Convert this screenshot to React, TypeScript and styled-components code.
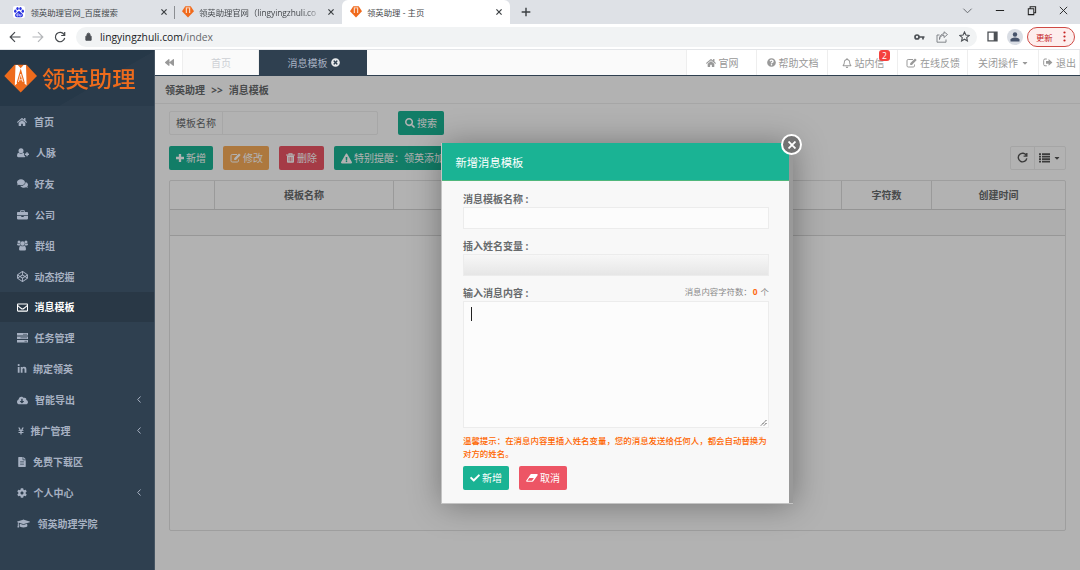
import React from 'react';
import styled, { createGlobalStyle } from 'styled-components';
import {
  FaHome, FaComments, FaCodepen, FaRegEnvelope,
  FaCloudDownloadAlt, FaYenSign, FaFileAlt, FaCog, FaGraduationCap, FaBackward,
  FaTimesCircle, FaQuestionCircle, FaRegBell, FaCaretDown, FaSearch,
  FaExclamationTriangle, FaCheck, FaLinkedinIn,
} from 'react-icons/fa';

const Global = createGlobalStyle`
  * { box-sizing: border-box; }
  html, body { margin: 0; padding: 0; overflow: hidden; }
  body {
    font-family: "Open Sans", "Noto Sans CJK SC", sans-serif;
    font-size: 10px;
    color: #676a6c;
  }
  svg { display: block; flex: none; }
`;

const Window = styled.div`
  width: 1080px;
  height: 570px;
  display: flex;
  flex-direction: column;
  background: #fff;
  overflow: hidden;
`;

/* Browser frame */
const TabStrip = styled.div`
  height: 24px;
  flex: none;
  display: flex;
  background: #dee1e6;
`;
const BrowserTab = styled.div<{ $w: number; $inset: number; $gap: number; $active?: boolean; $line?: boolean }>`
  width: ${p => p.$w}px;
  height: 24px;
  padding: 0 8px 0 ${p => p.$inset}px;
  display: flex;
  align-items: center;
  gap: ${p => p.$gap}px;
  font-size: 8.4px;
  color: #45494d;
  background-color: ${p => (p.$active ? '#fff' : 'transparent')};
  border-radius: 6px 6px 0 0;
  background-image: ${p => (p.$line ? 'linear-gradient(#8b8e92, #8b8e92)' : 'none')};
  background-repeat: no-repeat;
  background-size: 1px 13px;
  background-position: right 6px;
`;
const TabTitle = styled.span<{ $fade?: boolean }>`
  flex: 1;
  min-width: 0;
  white-space: nowrap;
  line-height: 14px;
  padding-top: 1px;
  letter-spacing: ${p => (p.$fade ? '-0.05px' : '0')};
  mask-image: ${p => (p.$fade ? 'linear-gradient(90deg, #000 86%, transparent)' : 'none')};
`;
const WindowButtons = styled.div`
  margin-left: auto;
  display: flex;
  gap: 21px;
  padding: 5px 11px 0 0;
`;
const NewTab = styled.div`
  padding: 7px 0 0 11px;
`;
const AddressRow = styled.div`
  height: 26px;
  flex: none;
  display: flex;
  align-items: center;
  border-bottom: 1px solid #e3e5e8;
  padding: 0 5px 0 9px;
`;
const NavIcons = styled.div`
  width: 67px;
  flex: none;
  display: flex;
  gap: 10.5px;
`;
const AddressBar = styled.div`
  width: 901px;
  flex: none;
  height: 20px;
  border-radius: 10px;
  background: #f1f3f4;
  display: flex;
  align-items: center;
  padding: 0 7px 0 8px;
`;
const Url = styled.span`
  flex: 1;
  padding-left: 7px;
  font-size: 10.3px;
  line-height: 14px;
  color: #66696d;
  b { font-weight: 400; color: #202124; }
`;
const BarIcons = styled.div`
  display: flex;
  align-items: center;
  gap: 11px;
`;
const BarEnd = styled.div`
  flex: 1;
  display: flex;
  align-items: center;
  justify-content: flex-end;
`;
const Avatar = styled.div`
  width: 16px;
  height: 16px;
  margin: 0 4px 0 9px;
  border-radius: 50%;
  background: #d9dde4;
  display: grid;
  place-items: center;
`;
const Update = styled.div`
  width: 48px;
  height: 20px;
  border: 1px solid #cf4a45;
  border-radius: 10px;
  background: #fdeeed;
  color: #c5221f;
  font-size: 8.4px;
  display: flex;
  align-items: center;
  justify-content: space-between;
  padding: 0 8px 0 8px;
`;

/* Sidebar */
const Body = styled.div`
  flex: 1;
  display: flex;
  min-height: 0;
`;
const Sidebar = styled.nav`
  width: 155px;
  flex: none;
  background: #2f4050;
  border-right: 1px solid #465563;
`;
const Brand = styled.div`
  height: 56px;
  padding-left: 4px;
  display: flex;
  align-items: center;
  gap: 5px;
  background: linear-gradient(150deg, #263848 0 62%, #2a3b4b 62.5%);
  color: #ee6b1c;
  font-size: 23.4px;
  font-weight: 500;
  line-height: 30px;
  font-family: "Noto Sans CJK SC", sans-serif;
`;
const BrandName = styled.span`
  display: block;
  transform: scaleY(0.93);
`;
const MenuItem = styled.div<{ $active?: boolean }>`
  height: 30.93px;
  padding: 1px 13px 0 17px;
  display: flex;
  align-items: center;
  font-weight: 700;
  line-height: 16px;
  color: ${p => (p.$active ? '#fff' : '#a7b1c2')};
  background: ${p => (p.$active ? '#293846' : 'transparent')};
`;
const IconSlot = styled.span<{ $w: number }>`
  width: ${p => p.$w}px;
`;
const Chevron = styled.span`
  margin-left: auto;
  padding-bottom: 2px;
`;

/* Main */
const Main = styled.div`
  flex: 1;
  min-width: 0;
  display: flex;
  flex-direction: column;
`;
const TopNav = styled.div`
  height: 26px;
  flex: none;
  display: flex;
  background: #fafafa;
  border-bottom: 1px solid #2f4050;
  color: #999;
  line-height: 14px;
`;
const NavCell = styled.div<{ $w: number; $kind?: 'dark' | 'faint' | 'white' }>`
  width: ${p => p.$w}px;
  height: 25px;
  display: flex;
  align-items: center;
  justify-content: center;
  gap: 3px;
  padding-left: 1px;
  white-space: nowrap;
  color: ${p => (p.$kind === 'dark' ? '#a7b1c2' : p.$kind === 'faint' ? '#cdd0d5' : '#999')};
  background: ${p => (p.$kind === 'dark' ? '#2f4050' : p.$kind === 'white' ? '#fff' : '#fafafa')};
  border-right: ${p => (p.$kind === 'dark' ? 0 : 1)}px solid #eee;
  position: relative;
`;
const Spacer = styled.div`
  flex: 1;
  border-right: 1px solid #eee;
`;
const Badge = styled.span`
  position: absolute;
  right: 7px;
  top: 0;
  width: 11px;
  height: 11px;
  border-radius: 3px;
  background: #f5413d;
  color: #fff;
  font-size: 8.5px;
  line-height: 11px;
  text-align: center;
`;
const Page = styled.div`
  flex: 1;
  position: relative;
  background: #fff;
  overflow: hidden;
`;
const Crumbs = styled.div`
  height: 28px;
  padding: 0 10px;
  border-bottom: 1px solid #eee;
  font-weight: 700;
  line-height: 28px;
  word-spacing: 3.6px;
`;
const Content = styled.div`
  padding: 7px 14px 0;
`;
const SearchRow = styled.div`
  display: flex;
  gap: 20px;
`;
const SearchGroup = styled.div`
  width: 209px;
  height: 24px;
  display: flex;
  border: 1px solid #efefef;
  border-radius: 2px;
  line-height: 22px;
`;
const SearchLabel = styled.div`
  width: 53px;
  padding-left: 6px;
  border-right: 1px solid #efefef;
`;
const tones = { green: '#1ab394', orange: '#f8ac59', red: '#ed5565' };
const Button = styled.div<{ $tone: keyof typeof tones; $w: number }>`
  width: ${p => p.$w}px;
  height: 24px;
  flex: none;
  display: flex;
  align-items: center;
  gap: 2px;
  padding-left: 7px;
  border-radius: 2px;
  background: ${p => tones[p.$tone]};
  color: #fff;
  line-height: 16px;
  white-space: nowrap;
`;
const ToolRow = styled.div`
  display: flex;
  gap: 10px;
  margin-top: 11px;
`;
const ToolGroup = styled.div`
  margin-left: auto;
  width: 56px;
  height: 24px;
  display: flex;
  border: 1px solid #ededed;
  border-radius: 2px;
`;
const Tool = styled.div<{ $w: number }>`
  width: ${p => p.$w}px;
  display: flex;
  align-items: center;
  justify-content: center;
  gap: 3px;
  padding-bottom: 1px;
  & + & { border-left: 1px solid #ededed; }
`;
const Table = styled.div`
  height: 351px;
  margin-top: 10px;
  border: 1px solid #e2e2e2;
  border-radius: 2px;
`;
const HeadRow = styled.div`
  height: 29px;
  display: grid;
  grid-template-columns: 45px 179px 448px 90px 1fr;
  border-bottom: 1px solid #d5d5d5;
`;
const HeadCell = styled.div`
  display: grid;
  place-items: center;
  font-weight: 700;
  line-height: 16px;
  border-right: 1px solid #ddd;
  &:last-child { border-right: 0; }
`;
const EmptyRow = styled.div`
  height: 26px;
  background: #f9f9f9;
  border-bottom: 1px solid #d9d9d9;
`;
const Shade = styled.div`
  position: absolute;
  inset: 0;
  background: rgba(0, 0, 0, 0.3);
`;

/* Dialog over the page */
const Dialog = styled.div`
  position: absolute;
  left: 286px;
  top: 67px;
  width: 352px;
  height: 361px;
  background: #999;
  border: 1px solid #c4c4c4;
  border-width: 0 0 1px 1px;
  box-shadow: 1px 1px 30px rgba(0, 0, 0, 0.35);
`;
const Sheet = styled.div`
  width: 347px;
  height: 360px;
  background: #f8f8f8;
`;
const DialogTitle = styled.div`
  height: 38px;
  padding-left: 13.5px;
  background: #1ab394;
  border-bottom: 1px solid #4fb77c;
  color: #fff;
  font-size: 11.3px;
  line-height: 39px;
`;
const CloseDialog = styled.div`
  position: absolute;
  right: -9px;
  top: -9px;
  width: 21px;
  height: 21px;
  border: 2px solid #fff;
  border-radius: 50%;
  background: #737373;
  display: grid;
  place-items: center;
`;
const Form = styled.div`
  padding: 10px 20px 0 21px;
`;
const LabelRow = styled.div`
  height: 16px;
  display: flex;
  justify-content: space-between;
  font-weight: 700;
  line-height: 17px;
`;
const Counter = styled.span`
  font-size: 8.4px;
  font-weight: 400;
  line-height: 13px;
  color: #888;
  b { color: #ff6a13; padding: 0 1px; }
`;
const Field = styled.div<{ $h: number; $shaded?: boolean }>`
  height: ${p => p.$h}px;
  border: 1px solid #ececec;
  background: ${p => (p.$shaded ? 'linear-gradient(#f7f7f7, #e6e6e6)' : '#fcfcfc')};
  margin-bottom: 9px;
  position: relative;
`;
const Caret = styled.div`
  width: 1px;
  height: 14px;
  margin: 5px 0 0 7px;
  background: #222;
`;
const Grip = styled.svg`
  position: absolute;
  right: 1px;
  bottom: 1px;
`;
const Tip = styled.div`
  margin-top: -2px;
  color: #ff6600;
  font-size: 8.45px;
  font-weight: 500;
  line-height: 12.5px;
  white-space: nowrap;
`;
const Actions = styled.div`
  display: flex;
  gap: 10px;
  margin-top: 6px;
`;

const TieLogo = () => (
  <svg width="33" height="29" viewBox="0 0 33 29">
    <path d="M10.500 .8H22.500L33 12L16.700 28.500L.3 12Z" fill="#ee6b1c" />
    <path d="M11.500 1H13.800L16.700 4.300L19.600 1H22L22.600 21.500L20.500 19.500L16.900 7.500H16.500L13 19.500L10.800 21.500Z" fill="#fff" />
    <path d="M16.700 4.500L20.700 18.500L16.700 22L12.700 18.500Z" fill="#ee6b1c" />
    <path d="M16.700 10L19 18M16.700 10L14.400 18M15.200 15.800H18.200" stroke="#fff" strokeWidth=".8" fill="none" />
  </svg>
);
const MiniLogo = () => (
  <svg width="12" height="12" viewBox="0 0 12 12">
    <path d="M3.300 .2H8.700L12 5.200L6 11.500L0 5.200Z" fill="#f06a1c" />
    <path d="M4.300 1.300V7M7.700 1.300V7M6 1V2.500" stroke="#fff" strokeWidth=".9" />
  </svg>
);
const Paw = () => (
  <svg width="12" height="12" viewBox="0 0 12 12">
    <rect width="12" height="12" rx="2" fill="#fff" />
    <g fill="#2932e1">
      <ellipse cx="2.300" cy="5.200" rx="1.200" ry="1.600" />
      <ellipse cx="4.500" cy="2.600" rx="1.200" ry="1.600" />
      <ellipse cx="7.500" cy="2.600" rx="1.200" ry="1.600" />
      <ellipse cx="9.800" cy="5.200" rx="1.200" ry="1.600" />
      <path d="M6 5C4.800 5 4.300 6.600 3.200 7.300C1.200 8.800 2.100 11.500 4.200 11.200H7.800C10 11.500 10.800 8.800 8.800 7.300C7.700 6.600 7.200 5 6 5Z" />
    </g>
    <path d="M4.900 8h-1v2h1.200v-3M6.600 8v2h1.500v-2" fill="none" stroke="#fff" strokeWidth=".6" />
  </svg>
);
const Cross = ({ s = 6, c = '#3c4043', sw = 1.2 }: { s?: number; c?: string; sw?: number }) => (
  <svg width={s} height={s} viewBox="0 0 6 6">
    <path d="M.4 .4L5.600 5.600M5.600 .4L.4 5.600" stroke={c} strokeWidth={(sw * 6) / s} />
  </svg>
);
const Lines = ({ d, s = 10, c = '#5f6368', sw = 1.2, fill = 'none' }: { d: string; s?: number; c?: string; sw?: number; fill?: string }) => (
  <svg width={s} height={s} viewBox="0 0 12 12">
    <path d={d} fill={fill} stroke={c} strokeWidth={sw} />
  </svg>
);
const reloadPath = 'M10.200 3.700A4.700 4.700 0 1 0 10.700 7M10.700 1V4.500H7.200';

const ServerBars = () => (
  <svg width="11" height="10" viewBox="0 0 11 10">
    <path d="M0 1.300h11M0 4.800h11M0 8.300h11" stroke="currentColor" strokeWidth="2.500" />
    <path d="M6 1.300h4M3.500 4.800h6.500M7.500 8.300h2.500" stroke="#2f4050" strokeWidth=".6" />
  </svg>
);
const PersonPlus = () => (
  <svg width="12" height="10" viewBox="0 0 12 10" fill="currentColor">
    <circle cx="4" cy="2.800" r="2.500" />
    <path d="M1.800 4.800Q4 6.800 6.200 4.800Q6.800 4.900 7.200 5.500V7.800H8.200V8.700Q7.900 9.200 7 9.200H1.300Q0 9.200 0 7.800Q0 5 1.800 4.800Z" />
    <path d="M8 5.500H12V7H8ZM9.250 4.200H10.750V8.300H9.250Z" />
  </svg>
);
const Case = () => (
  <svg width="11" height="10" viewBox="0 0 11 10" fill="currentColor">
    <path d="M3.200 2V.9Q3.200 .3 3.900 .3H7.100Q7.800 .3 7.800 .9V2H10.200Q11 2 11 2.800V5.300H0V2.800Q0 2 .8 2ZM4.100 2H6.900V1.200H4.100Z" />
    <path d="M0 5.900H4.300V6.900H6.700V5.900H11V8.600Q11 9.400 10.200 9.400H.8Q0 9.400 0 8.600Z" />
  </svg>
);
const People = () => (
  <svg width="11" height="11" viewBox="0 0 11 11" fill="currentColor">
    <circle cx="2" cy="2" r="1.500" /><circle cx="9" cy="2" r="1.500" /><circle cx="5.500" cy="3.500" r="2.200" />
    <path d="M.8 3.500Q1.800 4.200 2.900 3.600Q3 4.800 3.700 5.400H1Q0 5.400 0 4.600Q0 3.500 .8 3.500ZM10.200 3.500Q9.200 4.200 8.100 3.600Q8 4.800 7.300 5.400H10Q11 5.400 11 4.600Q11 3.500 10.200 3.500Z" />
    <path d="M3.600 5.700Q5.500 7 7.400 5.700Q9 6 9 9Q9 10.600 7.700 10.600H3.300Q2 10.600 2 9Q2 6 3.600 5.700Z" />
  </svg>
);
const PencilBox = () => (
  <svg width="11" height="10" viewBox="0 0 11 10">
    <path d="M7 1.500H2.200Q1 1.500 1 2.700V7.800Q1 9 2.200 9H7.300Q8.500 9 8.500 7.800V6.500" fill="none" stroke="currentColor" strokeWidth="1" />
    <path d="M9 .4L10.700 2.100L5.900 6.900H4.200V5.200Z" fill="currentColor" />
  </svg>
);
const Leave = () => (
  <svg width="10" height="9" viewBox="0 0 10 9">
    <path d="M3.800 1H2Q.7 1 .7 2.300V6.500Q.7 7.800 2 7.800H3.800" fill="none" stroke="currentColor" strokeWidth="1" />
    <path d="M3 3.100H5.600V1L9.400 4.400L5.600 7.800V5.700H3Z" fill="currentColor" />
  </svg>
);
const Bin = () => (
  <svg width="9" height="10" viewBox="0 0 9 10">
    <path d="M0 2H9M3 2V.8H6V2" fill="none" stroke="currentColor" strokeWidth="1.100" />
    <path d="M1 2.500H8V8.700Q8 9.700 7.100 9.700H1.900Q1 9.700 1 8.700Z" fill="currentColor" />
    <path d="M3 4V8.300M4.500 4V8.300M6 4V8.300" stroke="#ed5565" strokeWidth=".6" />
  </svg>
);
const Rubber = () => (
  <svg width="12" height="10" viewBox="0 0 12 10" fill="currentColor">
    <path d="M5 1H11Q12 1.200 11.600 2.200L7.300 8.300Q7 8.700 6.400 8.700H.8Q-.1 8.500 .3 7.500L4.400 1.400Q4.600 1 5 1ZM1.400 7.800H6L7.900 5.100H3.300Z" fillRule="evenodd" />
  </svg>
);
const Plus = () => (
  <svg width="8" height="8" viewBox="0 0 8 8"><path d="M4 0V8M0 4H8" stroke="currentColor" strokeWidth="2.300" /></svg>
);
const Angle = () => (
  <svg width="4" height="7" viewBox="0 0 4 7"><path d="M3.500 .5L.7 3.500L3.500 6.500" fill="none" stroke="currentColor" strokeWidth="1" /></svg>
);

const menu: { label: string; icon: React.ComponentType<{ size?: number }>; slot: number; size?: number; more?: boolean }[] = [
  { label: '首页', icon: FaHome, slot: 17 },
  { label: '人脉', icon: PersonPlus, slot: 19 },
  { label: '好友', icon: FaComments, slot: 17.5, size: 11 },
  { label: '公司', icon: Case, slot: 18 },
  { label: '群组', icon: People, slot: 18 },
  { label: '动态挖掘', icon: FaCodepen, slot: 17.5, size: 11 },
  { label: '消息模板', icon: FaRegEnvelope, slot: 17.5, size: 11 },
  { label: '任务管理', icon: ServerBars, slot: 17.5 },
  { label: '绑定领英', icon: FaLinkedinIn, slot: 16 },
  { label: '智能导出', icon: FaCloudDownloadAlt, slot: 18, size: 11, more: true },
  { label: '推广管理', icon: FaYenSign, slot: 13.5, size: 8, more: true },
  { label: '免费下载区', icon: FaFileAlt, slot: 16 },
  { label: '个人中心', icon: FaCog, slot: 16.5, more: true },
  { label: '领英助理学院', icon: FaGraduationCap, slot: 20.5, size: 13 },
];

const BrowserFrame = () => (
  <>
    <TabStrip>
      <BrowserTab $w={175} $inset={13} $gap={5.5} $line>
        <Paw /><TabTitle>领英助理官网_百度搜索</TabTitle><Cross />
      </BrowserTab>
      <BrowserTab $w={167} $inset={7} $gap={5}>
        <MiniLogo /><TabTitle $fade>领英助理官网（lingyingzhuli.co</TabTitle><Cross />
      </BrowserTab>
      <BrowserTab $w={168} $inset={8} $gap={5} $active>
        <MiniLogo /><TabTitle>领英助理 - 主页</TabTitle><Cross />
      </BrowserTab>
      <NewTab><Lines d="M6 .8V11.200M.8 6H11.200" c="#3c4043" sw={1.7} /></NewTab>
      <WindowButtons>
        <Lines d="M1.500 4L6 8.500L10.500 4" s={11} sw={1} />
        <Lines d="M2 6H11" s={11} c="#222" sw={1.1} />
        <Lines d="M2.500 4H8.500V10.500H2.500ZM4.500 4V2H10.500V8.500H8.500" s={11} c="#222" sw={1.1} />
        <Lines d="M2 2L10 10M10 2L2 10" s={11} c="#222" sw={1} />
      </WindowButtons>
    </TabStrip>
    <AddressRow>
      <NavIcons>
        <Lines d="M11.500 6H1.500M6 1.200L1.200 6L6 10.800" s={12} c="#45494d" />
        <Lines d="M.500 6H10.500M6 1.200L10.800 6L6 10.800" s={12} c="#b4b6b9" />
        <Lines d={reloadPath} s={12} c="#45494d" />
      </NavIcons>
      <AddressBar>
        <Lines d="M2.500 5.500H9.500V11H2.500ZM4 5.500V3.500A2 2 0 0 1 8 3.500V5.500" s={9} c="#4d5156" sw={1.3} fill="#4d5156" />
        <Url><b>lingyingzhuli.com</b>/index</Url>
        <BarIcons>
          <svg width="11" height="8" viewBox="0 0 11 8">
            <circle cx="3" cy="4" r="2" fill="none" stroke="#4d5156" strokeWidth="1.700" />
            <path d="M5 4H10.500M9 4V6.500" stroke="#4d5156" strokeWidth="1.700" />
          </svg>
          <Lines d="M3.500 4H1V11.200H10V8.500M3.500 8.500C3.700 5.500 5.500 4.300 8 4.300V6.500L11.500 3.500L8 .8V2.800C5 3 3.500 5 3.500 8.500Z" s={12} c="#777b80" sw={0.9} />
          <Lines d="M6 1L7.500 4.400L11.200 4.800L8.400 7.200L9.200 10.900L6 9L2.800 10.900L3.600 7.200L.8 4.800L4.500 4.400Z" s={11} c="#4d5156" />
        </BarIcons>
      </AddressBar>
      <BarEnd>
        <svg width="11" height="11" viewBox="0 0 11 11">
          <path d="M1 1.200H10V9.800H1Z" fill="#fff" stroke="#4d5156" strokeWidth="1.300" />
          <path d="M6.700 1H10V10H6.700Z" fill="#4d5156" />
        </svg>
        <Avatar>
          <svg width="10" height="10" viewBox="0 0 10 10" fill="#46536b">
            <circle cx="5" cy="2.500" r="2.200" /><path d="M.500 9.500V7.500Q1 5.800 5 5.500Q9 5.800 9.500 7.500V9.500Z" />
          </svg>
        </Avatar>
        <Update>
          更新
          <svg width="3" height="11" viewBox="0 0 3 11" fill="#c5221f">
            <circle cx="1.500" cy="1.500" r="1.100" /><circle cx="1.500" cy="5.500" r="1.100" /><circle cx="1.500" cy="9.500" r="1.100" />
          </svg>
        </Update>
      </BarEnd>
    </AddressRow>
  </>
);

const MessageDialog = () => (
  <Dialog>
    <Sheet>
      <DialogTitle>新增消息模板</DialogTitle>
      <Form>
        <LabelRow>消息模板名称 :</LabelRow>
        <Field $h={22} />
        <LabelRow>插入姓名变量 :</LabelRow>
        <Field $h={22} $shaded />
        <LabelRow>
          <span>输入消息内容 :</span>
          <Counter>消息内容字符数：<b>0</b> 个</Counter>
        </LabelRow>
        <Field $h={127}>
          <Caret />
          <Grip width="7" height="7" viewBox="0 0 7 7">
            <path d="M1 6.500L6.500 1M4 6.500L6.500 4" stroke="#444" strokeWidth="1" strokeDasharray="1.500 .5" />
          </Grip>
        </Field>
        <Tip>温馨提示：在消息内容里插入姓名变量，您的消息发送给任何人，都会自动替换为<br />对方的姓名。</Tip>
        <Actions>
          <Button $tone="green" $w={46}><FaCheck size={10} />新增</Button>
          <Button $tone="red" $w={48}><Rubber />取消</Button>
        </Actions>
      </Form>
    </Sheet>
    <CloseDialog><Cross s={8} c="#fff" sw={1.8} /></CloseDialog>
  </Dialog>
);

export default function App() {
  return (
    <Window>
      <Global />
      <BrowserFrame />
      <Body>
        <Sidebar>
          <Brand><TieLogo /><BrandName>领英助理</BrandName></Brand>
          {menu.map(({ label, icon: Icon, slot, size, more }) => (
            <MenuItem key={label} $active={label === '消息模板'}>
              <IconSlot $w={slot}><Icon size={size ?? 10} /></IconSlot>
              {label}
              {more && <Chevron><Angle /></Chevron>}
            </MenuItem>
          ))}
        </Sidebar>
        <Main>
          <TopNav>
            <NavCell $w={28} $kind="white"><FaBackward size={9} /></NavCell>
            <NavCell $w={76} $kind="faint">首页</NavCell>
            <NavCell $w={108} $kind="dark">消息模板 <FaTimesCircle size={9} color="#e8eaec" /></NavCell>
            <Spacer />
            <NavCell $w={70} $kind="white"><FaHome size={10} />官网</NavCell>
            <NavCell $w={71} $kind="white"><FaQuestionCircle size={9} />帮助文档</NavCell>
            <NavCell $w={70} $kind="white"><FaRegBell size={10} />站内信<Badge>2</Badge></NavCell>
            <NavCell $w={70} $kind="white"><PencilBox />在线反馈</NavCell>
            <NavCell $w={71} $kind="white">关闭操作<FaCaretDown size={8} /></NavCell>
            <NavCell $w={41} $kind="white"><Leave />退出</NavCell>
          </TopNav>
          <Page>
            <Crumbs>领英助理 &gt;&gt; 消息模板</Crumbs>
            <Content>
              <SearchRow>
                <SearchGroup><SearchLabel>模板名称</SearchLabel></SearchGroup>
                <Button $tone="green" $w={46}><FaSearch size={10} />搜索</Button>
              </SearchRow>
              <ToolRow>
                <Button $tone="green" $w={44}><Plus />新增</Button>
                <Button $tone="orange" $w={46}><PencilBox />修改</Button>
                <Button $tone="red" $w={45}><Bin />删除</Button>
                <Button $tone="green" $w={240}><FaExclamationTriangle size={11} />特别提醒：领英添加</Button>
                <ToolGroup>
                  <Tool $w={23}><Lines d={reloadPath} s={11} c="#555" sw={1.5} /></Tool>
                  <Tool $w={31}>
                    <svg width="11" height="10" viewBox="0 0 11 10">
                      <path d="M0 1.200h2M3 1.200h8M0 3.700h2M3 3.700h8M0 6.200h2M3 6.200h8M0 8.700h2M3 8.700h8" stroke="#555" strokeWidth="1.700" />
                    </svg>
                    <FaCaretDown size={8} color="#555" />
                  </Tool>
                </ToolGroup>
              </ToolRow>
              <Table>
                <HeadRow>
                  <HeadCell /><HeadCell>模板名称</HeadCell><HeadCell /><HeadCell>字符数</HeadCell><HeadCell>创建时间</HeadCell>
                </HeadRow>
                <EmptyRow />
              </Table>
            </Content>
            <Shade />
            <MessageDialog />
          </Page>
        </Main>
      </Body>
    </Window>
  );
}
